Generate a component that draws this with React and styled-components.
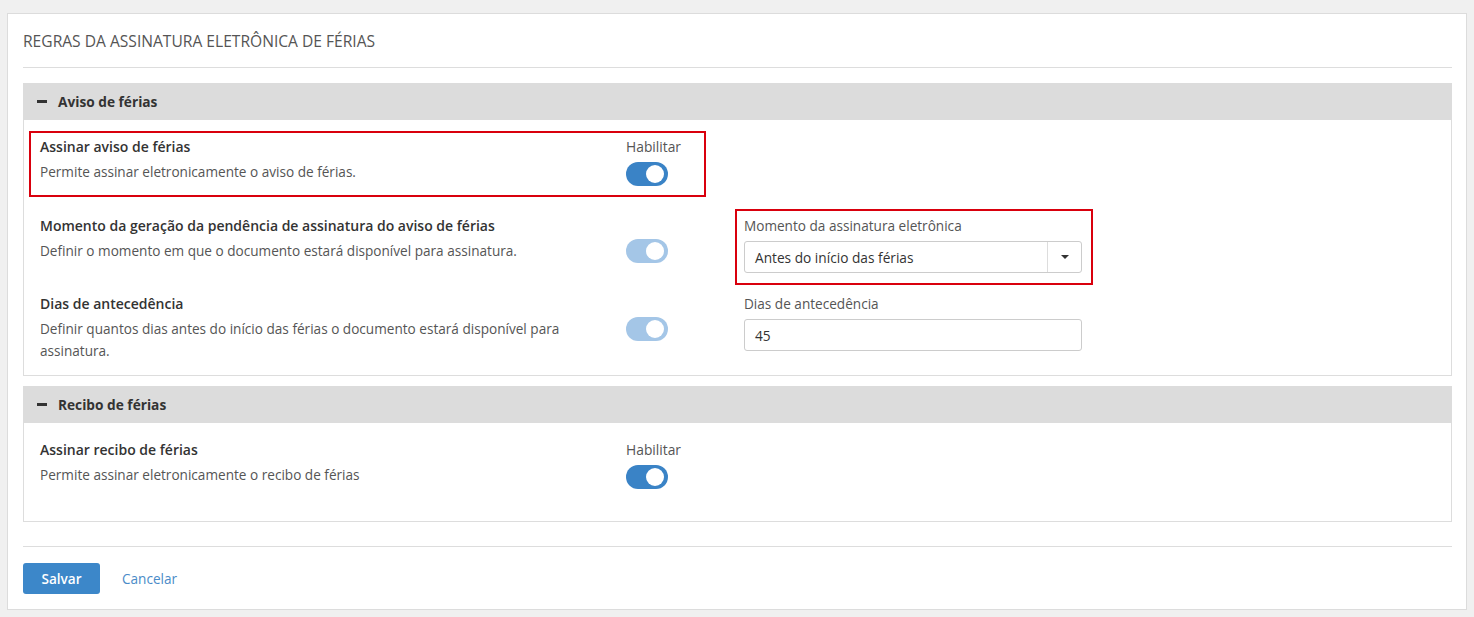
import styled, { createGlobalStyle } from 'styled-components'

const GlobalStyle = createGlobalStyle`
  body {
    margin: 0;
    background: #f0f0f0;
    font-family: 'Open Sans', 'Noto Sans', sans-serif;
    color: #333;
  }
`

const Page = styled.div`
  padding: 13px 7px 8px 7px;
`

const Card = styled.div`
  background: #fff;
  border: 1px solid #dcdcdc;
  padding: 0 14px 15px 15px;
`

const Title = styled.h2`
  margin: 0;
  padding: 17px 0 16px;
  font-size: 15.6px;
  line-height: 20px;
  font-weight: 400;
  text-transform: uppercase;
  color: #555;
  border-bottom: 1px solid #ddd;
`

const Section = styled.section`
  margin-top: ${p => p.$first ? '15px' : '10px'};
`

const SectionHeader = styled.div`
  display: flex;
  align-items: center;
  gap: 11px;
  height: 37px;
  padding: 0 14px;
  background: #dcdcdc;
  font-size: 13.7px;
  font-weight: 700;
  color: #333;
`

const Minus = styled.span`
  width: 10px;
  height: 2.5px;
  background: #333;
`

const SectionBody = styled.div`
  border: 1px solid #ddd;
  border-top: none;
  padding: 11px 5px ${p => p.$bottom || '10px'};
`

const Row = styled.div`
  display: grid;
  grid-template-columns: 677px 358px;
  column-gap: 29px;
  align-items: start;
  min-height: 78px;
`

const Block = styled.div`
  display: flex;
  outline: ${p => p.$marked ? '2px solid #d9000d' : 'none'};
  outline-offset: -2px;
  padding: ${p => p.$pad};
`

const TextCol = styled.div`
  flex: 1;
  padding-right: 30px;
`

const Label = styled.div`
  font-size: 14px;
  line-height: 18px;
  font-weight: 600;
  color: #333;
`

const Desc = styled.div`
  margin-top: 5px;
  font-size: 13.6px;
  line-height: 22px;
  color: #555;
`

const ToggleCol = styled.div`
  display: flex;
  flex-direction: column;
  align-items: flex-start;
`

const ToggleCaption = styled.div`
  font-size: 13.8px;
  line-height: 18px;
  color: #555;
  visibility: ${p => p.$hidden ? 'hidden' : 'visible'};
`

const Toggle = styled.div`
  margin-top: ${p => p.$offset};
  width: 42px;
  height: 24px;
  border-radius: 12px;
  background: ${p => p.$disabled ? '#a4c6e7' : '#3a83c6'};
  position: relative;

  &::after {
    content: "";
    position: absolute;
    top: 3px;
    right: 4px;
    width: 18px;
    height: 18px;
    border-radius: 50%;
    background: #fff;
  }
`

const Field = styled.div`
  display: flex;
  flex-direction: column;
  width: 100%;
`

const FieldLabel = styled.div`
  font-size: 13.6px;
  line-height: 18px;
  color: #555;
  margin-bottom: 6px;
`

const Input = styled.div`
  display: flex;
  align-items: center;
  height: 32px;
  box-sizing: border-box;
  border: 1px solid #ccc;
  border-radius: 3px;
  font-size: 13.7px;
  color: #333;
  background: #fff;
`

const InputText = styled.span`
  flex: 1;
  padding-left: 10px;
`

const Caret = styled.span`
  display: flex;
  align-items: center;
  justify-content: center;
  width: 33px;
  height: 100%;
  border-left: 1px solid #ddd;

  &::before {
    content: "";
    border-left: 4px solid transparent;
    border-right: 4px solid transparent;
    border-top: 4px solid #333;
  }
`

const Footer = styled.div`
  margin-top: 24px;
  padding-top: 16px;
  border-top: 1px solid #ddd;
  display: flex;
  align-items: center;
  gap: 22px;
`

const Button = styled.button`
  width: 77px;
  height: 31px;
  border: none;
  border-radius: 3px;
  background: #3c87c9;
  color: #fff;
  font-family: inherit;
  font-size: 13.6px;
  font-weight: 600;
`

const LinkButton = styled.span`
  font-size: 13.6px;
  color: #4a8bc8;
`

function SettingText ({ label, desc }) {
  return (
    <TextCol>
      <Label>{label}</Label>
      <Desc>{desc}</Desc>
    </TextCol>
  )
}

function ToggleBox ({ caption, disabled }) {
  return (
    <ToggleCol>
      <ToggleCaption $hidden={!caption}>Habilitar</ToggleCaption>
      <Toggle $disabled={disabled} $offset={caption ? '6px' : '4px'} />
    </ToggleCol>
  )
}

export default function App () {
  return (
    <Page>
      <GlobalStyle />
      <Card>
        <Title>Regras da assinatura eletrônica de férias</Title>

        <Section $first>
          <SectionHeader><Minus />Aviso de férias</SectionHeader>
          <SectionBody>
            <Row>
              <Block $marked $pad="7px 25px 11px 11px">
                <SettingText
                  label="Assinar aviso de férias"
                  desc="Permite assinar eletronicamente o aviso de férias."
                />
                <ToggleBox caption />
              </Block>
            </Row>
            <Row>
              <Block $pad="8px 25px 11px 11px">
                <SettingText
                  label="Momento da geração da pendência de assinatura do aviso de férias"
                  desc="Definir o momento em que o documento estará disponível para assinatura."
                />
                <ToggleBox disabled />
              </Block>
              <Block $marked $pad="8px 11px 12px 9px">
                <Field>
                  <FieldLabel>Momento da assinatura eletrônica</FieldLabel>
                  <Input>
                    <InputText>Antes do início das férias</InputText>
                    <Caret />
                  </Input>
                </Field>
              </Block>
            </Row>
            <Row>
              <Block $pad="8px 25px 3px 11px">
                <SettingText
                  label="Dias de antecedência"
                  desc="Definir quantos dias antes do início das férias o documento estará disponível para assinatura."
                />
                <ToggleBox disabled />
              </Block>
              <Block $pad="8px 11px 12px 9px">
                <Field>
                  <FieldLabel>Dias de antecedência</FieldLabel>
                  <Input>
                    <InputText>45</InputText>
                  </Input>
                </Field>
              </Block>
            </Row>
          </SectionBody>
        </Section>

        <Section>
          <SectionHeader><Minus />Recibo de férias</SectionHeader>
          <SectionBody $bottom="9px">
            <Row>
              <Block $pad="7px 25px 11px 11px">
                <SettingText
                  label="Assinar recibo de férias"
                  desc="Permite assinar eletronicamente o recibo de férias"
                />
                <ToggleBox caption />
              </Block>
            </Row>
          </SectionBody>
        </Section>

        <Footer>
          <Button>Salvar</Button>
          <LinkButton>Cancelar</LinkButton>
        </Footer>
      </Card>
    </Page>
  )
}
